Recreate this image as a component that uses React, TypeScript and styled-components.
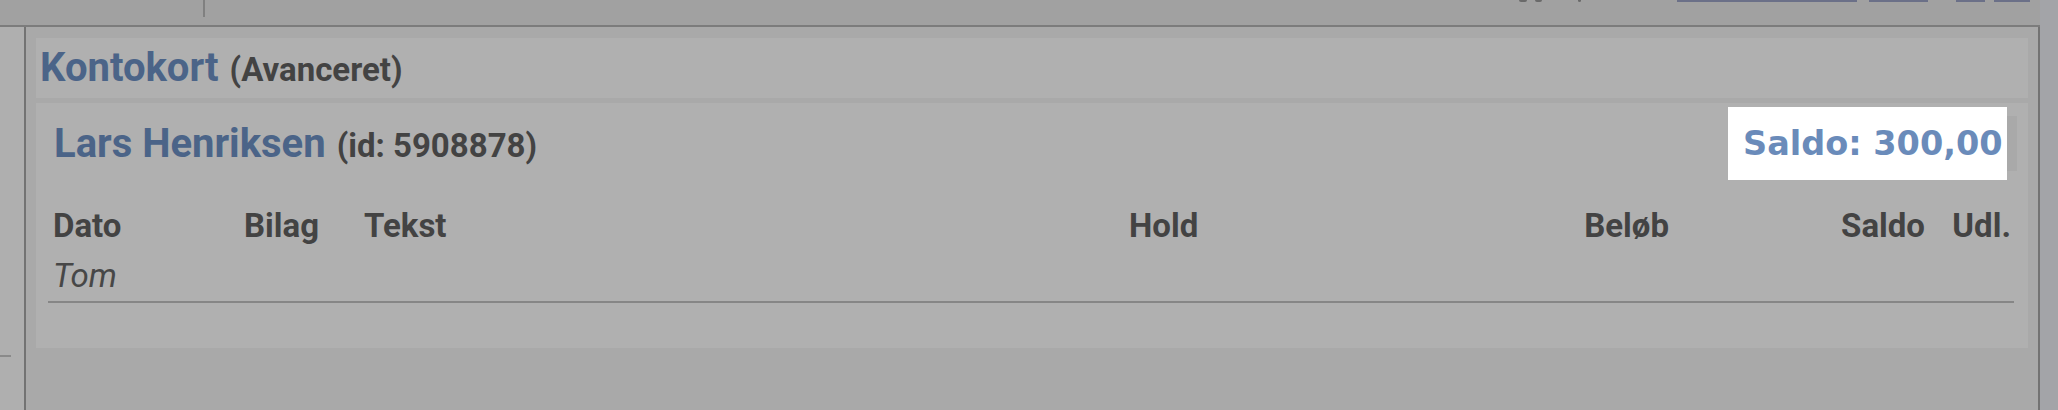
import React from "react";
import styled, { createGlobalStyle } from "styled-components";

const GlobalStyle = createGlobalStyle`
  html, body {
    margin: 0;
    padding: 0;
    background: #a9a9a9;
    overflow: hidden;
  }
  body {
    font-family: Roboto, "Liberation Sans", sans-serif;
  }
`;

const Colors = {
  TOPBAR: "#a1a1a1",
  TOPBAR_LINE: "#7c7c7c",
  SIDEBAR: "#afafaf",
  PANEL: "#a9a9a9",
  PANEL_LINE: "#737373",
  BOX: "#b0b0b0",
  SCROLL: "#a3a4a8",
  BLUE: "#4b6488",
  DARK: "#434343",
  RULE: "#868686",
  SALDO: "#6a8bba",
};

const Screen = styled.div`
  display: flex;
  width: 2058px;
  height: 410px;
`;

const Main = styled.div`
  flex: 1;
  display: flex;
  flex-direction: column;
`;

const Scrollbar = styled.div`
  width: 18px;
  background: ${Colors.SCROLL};
`;

const TopBar = styled.div`
  height: 25px;
  display: flex;
  align-items: flex-start;
  background: ${Colors.TOPBAR};
  border-bottom: 2px solid ${Colors.TOPBAR_LINE};
`;

const TopSeparator = styled.div`
  width: 2px;
  height: 17px;
  margin-left: 203px;
  background: #808080;
`;

// bottoms of the cut-off header texts and links
const TopNav = styled.div`
  margin-left: auto;
  margin-right: 10px;
  display: flex;
  align-items: flex-start;
`;

const TextStub = styled.span<{ $width: number; $gap: number }>`
  display: block;
  width: ${(p) => p.$width}px;
  margin-left: ${(p) => p.$gap}px;
  height: 2px;
  border-radius: 0 0 3px 3px;
  background: #6a6a6a;
`;

const LinkStub = styled.span<{ $width: number; $gap: number }>`
  display: block;
  width: ${(p) => p.$width}px;
  margin-left: ${(p) => p.$gap}px;
  height: 2px;
  background: #6b7088;
`;

const Body = styled.div`
  flex: 1;
  display: flex;
`;

const Sidebar = styled.div`
  width: 24px;
  background: ${Colors.SIDEBAR};
  display: flex;
  flex-direction: column;
  padding-top: 328px;
  box-sizing: border-box;
`;

const SidebarTick = styled.div`
  width: 11px;
  height: 2px;
  background: #8a8a8a;
`;

const Panel = styled.div`
  flex: 1;
  background: ${Colors.PANEL};
  border-left: 2px solid ${Colors.PANEL_LINE};
  border-right: 2px solid ${Colors.PANEL_LINE};
  padding: 11px 10px 0 10px;
`;

const TitleBox = styled.div`
  height: 60px;
  background: ${Colors.BOX};
  display: flex;
  align-items: baseline;
  padding: 0 4px;
  line-height: 60px;
`;

const Title = styled.span`
  font-size: 40px;
  font-weight: 700;
  color: ${Colors.BLUE};
`;

const Sub = styled.span`
  margin-left: 11px;
  font-size: 33px;
  font-weight: 700;
  color: ${Colors.DARK};
`;

const CustomerBox = styled.div`
  margin-top: 5px;
  background: ${Colors.BOX};
  padding: 13px 11px 45px 12px;
`;

const NameRow = styled.div`
  height: 55px;
  display: flex;
  align-items: center;
  justify-content: space-between;
  padding-left: 6px;
`;

const Name = styled.div`
  display: flex;
  align-items: baseline;
`;

const SaldoSlot = styled.div`
  position: relative;
  width: 280px;
  height: 55px;
  background: #a9a9a9;
`;

const SaldoHighlight = styled.div`
  position: absolute;
  top: -9px;
  bottom: -9px;
  left: -9px;
  right: 10px;
  background: #ffffff;
  display: flex;
  align-items: center;
  padding-left: 15px;
  font-family: "DejaVu Sans", sans-serif;
  font-weight: 700;
  font-size: 33.5px;
  color: ${Colors.SALDO};
  white-space: nowrap;
`;

const Table = styled.div`
  margin: 35px 3px 0 0;
  display: grid;
  grid-template-columns: 191px 120px 765px 376px 172px 256px 86px;
`;

const HeadCell = styled.div<{ $right?: boolean }>`
  padding: 0 3px 10px 5px;
  line-height: 40px;
  font-size: 33px;
  font-weight: 700;
  color: ${Colors.DARK};
  text-align: ${(p) => (p.$right ? "right" : "left")};
`;

const EmptyRow = styled.div`
  grid-column: 1 / -1;
  padding: 0 3px 5px 5px;
  line-height: 40px;
  font-size: 33px;
  font-style: italic;
  color: #474747;
  border-bottom: 2px solid ${Colors.RULE};
`;

type Column = { label: string; right?: boolean };

const columns: Column[] = [
  { label: "Dato" },
  { label: "Bilag" },
  { label: "Tekst" },
  { label: "Hold" },
  { label: "Beløb", right: true },
  { label: "Saldo", right: true },
  { label: "Udl.", right: true },
];

const topStubs = [
  { width: 8, gap: 0 },
  { width: 7, gap: 8 },
  { width: 3, gap: 36 },
];

const topLinks = [
  { width: 180, gap: 96 },
  { width: 59, gap: 12 },
  { width: 29, gap: 28 },
  { width: 36, gap: 9 },
];

const App = () => {
  return (
    <>
      <GlobalStyle />
      <Screen>
        <Main>
          <TopBar>
            <TopSeparator />
            <TopNav>
              {topStubs.map((s, i) => (
                <TextStub key={"s" + i} $width={s.width} $gap={s.gap} />
              ))}
              {topLinks.map((l, i) => (
                <LinkStub key={"l" + i} $width={l.width} $gap={l.gap} />
              ))}
            </TopNav>
          </TopBar>
          <Body>
            <Sidebar>
              <SidebarTick />
            </Sidebar>
            <Panel>
              <TitleBox>
                <Title>Kontokort</Title>
                <Sub>(Avanceret)</Sub>
              </TitleBox>
              <CustomerBox>
                <NameRow>
                  <Name>
                    <Title>Lars Henriksen</Title>
                    <Sub>(id: 5908878)</Sub>
                  </Name>
                  <SaldoSlot>
                    <SaldoHighlight>Saldo: 300,00</SaldoHighlight>
                  </SaldoSlot>
                </NameRow>
                <Table>
                  {columns.map((c) => (
                    <HeadCell key={c.label} $right={c.right}>
                      {c.label}
                    </HeadCell>
                  ))}
                  <EmptyRow>Tom</EmptyRow>
                </Table>
              </CustomerBox>
            </Panel>
          </Body>
        </Main>
        <Scrollbar />
      </Screen>
    </>
  );
};

export default App;
